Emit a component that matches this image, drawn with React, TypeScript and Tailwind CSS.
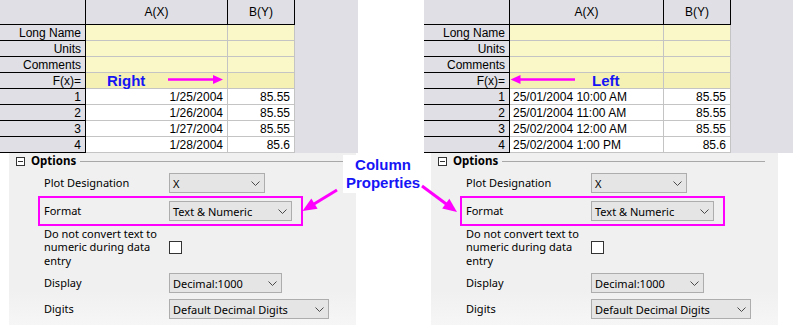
import React from 'react'

type Row = { head: string; a: string; b: string; kind: 'meta' | 'fx' | 'data' }

const leftRows: Row[] = [
  { head: 'Long Name', a: '', b: '', kind: 'meta' },
  { head: 'Units', a: '', b: '', kind: 'meta' },
  { head: 'Comments', a: '', b: '', kind: 'meta' },
  { head: 'F(x)=', a: '', b: '', kind: 'fx' },
  { head: '1', a: '1/25/2004', b: '85.55', kind: 'data' },
  { head: '2', a: '1/26/2004', b: '85.55', kind: 'data' },
  { head: '3', a: '1/27/2004', b: '85.55', kind: 'data' },
  { head: '4', a: '1/28/2004', b: '85.6', kind: 'data' },
]

const rightRows: Row[] = [
  { head: 'Long Name', a: '', b: '', kind: 'meta' },
  { head: 'Units', a: '', b: '', kind: 'meta' },
  { head: 'Comments', a: '', b: '', kind: 'meta' },
  { head: 'F(x)=', a: '', b: '', kind: 'fx' },
  { head: '1', a: '25/01/2004 10:00 AM', b: '85.55', kind: 'data' },
  { head: '2', a: '25/01/2004 11:00 AM', b: '85.55', kind: 'data' },
  { head: '3', a: '25/02/2004 12:00 AM', b: '85.55', kind: 'data' },
  { head: '4', a: '25/02/2004 1:00 PM', b: '85.6', kind: 'data' },
]

const cellBg = (kind: Row['kind']) =>
  kind === 'meta' ? 'bg-[#faf8c8]'
  : kind === 'fx' ? 'bg-[#f5f1b4]'
  : 'bg-white'

const Worksheet = ({
  rows,
  colA,
  alignA,
  fxLabel,
}: {
  rows: Row[]
  colA: string
  alignA: 'left' | 'right'
  fxLabel: React.ReactNode
}) => (
  <div className="flex w-full flex-col bg-[#dfdfe5] font-['Liberation_Sans',Arial,sans-serif] text-[12px] text-black">
    <div className="flex h-[25px]">
      <div className="h-full w-[86px] shrink-0 border-r border-b border-black" />
      <div className={`flex h-full ${colA} shrink-0 items-center justify-center border-r border-b border-black`}>A(X)</div>
      <div className="flex h-full w-[67px] shrink-0 items-center justify-center border-r border-b border-black">B(Y)</div>
    </div>
    {rows.map(row => (
      <div key={row.head} className="flex h-[16px]">
        <div className="flex h-full w-[86px] shrink-0 items-center justify-end border-r border-b border-black pr-[4px] leading-none">
          {row.head}
        </div>
        <div
          className={`flex h-full ${colA} shrink-0 items-center border-r border-b border-[#c4c4c4] leading-none ${cellBg(row.kind)} ${
            alignA === 'right' ? 'justify-end pr-[4px]' : 'justify-start pl-[3px]'
          }`}>
          {row.kind === 'fx' ? fxLabel : row.a}
        </div>
        <div
          className={`flex h-full w-[67px] shrink-0 items-center justify-end border-r border-b border-[#c4c4c4] pr-[4px] leading-none ${cellBg(row.kind)}`}>
          {row.b}
        </div>
      </div>
    ))}
  </div>
)

const Chevron = () => (
  <svg width="9" height="5" viewBox="0 0 9 5" className="shrink-0">
    <polyline points="0.5,0.5 4.5,4.5 8.5,0.5" fill="none" stroke="#4a4a4a" strokeWidth="1" />
  </svg>
)

const Dropdown = ({ value, width }: { value: string; width: string }) => (
  <div className={`flex h-[20px] ${width} items-center justify-between border border-[#adadad] bg-[#e5e5e5] pr-[4px] pl-[3px]`}>
    <span className="leading-none">{value}</span>
    <Chevron />
  </div>
)

const Label = ({ children }: { children: React.ReactNode }) => (
  <div className="w-[125px] shrink-0 leading-[13.3px]">{children}</div>
)

const OptionsPanel = () => (
  <div className="flex h-[172px] w-[347px] flex-col bg-gradient-to-b from-[#f0f0f0] from-80% to-[#f6f6f6] font-['Noto_Sans',sans-serif] text-[11px] text-black">
    <div className="flex h-[16px] items-center pl-[7px]">
      <div className="flex h-[9px] w-[9px] items-center justify-center border border-[#333] bg-white">
        <div className="h-px w-[5px] bg-[#333]" />
      </div>
      <span className="ml-[6px] text-[11.5px] leading-none font-bold">Options</span>
      <div className="mr-[13px] ml-[4px] h-px flex-1 bg-[#a8a8a8]" />
    </div>

    <div className="mt-[4px] flex h-[20px] items-center pl-[35px]">
      <Label>Plot Designation</Label>
      <Dropdown value="X" width="w-[96px]" />
    </div>

    <div className="mt-[3px] ml-[29px] flex h-[30px] w-[265px] items-center border-2 border-[#ff00ff] pl-[4px]">
      <Label>Format</Label>
      <Dropdown value="Text & Numeric" width="w-[123px]" />
    </div>

    <div className="mt-[1px] flex h-[40px] items-center pl-[35px]">
      <Label>Do not convert text to numeric during data entry</Label>
      <div className="h-[13px] w-[13px] border border-[#333] bg-white" />
    </div>

    <div className="mt-[6px] flex h-[20px] items-center pl-[35px]">
      <Label>Display</Label>
      <Dropdown value="Decimal:1000" width="w-[113px]" />
    </div>

    <div className="mt-[6px] flex h-[20px] items-center pl-[35px]">
      <Label>Digits</Label>
      <Dropdown value="Default Decimal Digits" width="w-[160px]" />
    </div>
  </div>
)

const Arrow = ({ x1, y1, x2, y2, head, half, width }: { x1: number; y1: number; x2: number; y2: number; head: number; half: number; width: number }) => {
  const len = Math.hypot(x2 - x1, y2 - y1)
  const ux = (x2 - x1) / len
  const uy = (y2 - y1) / len
  const bx = x2 - ux * head
  const by = y2 - uy * head
  const nx = -uy * half
  const ny = ux * half
  return (
    <g>
      <line x1={x1} y1={y1} x2={bx + ux} y2={by + uy} stroke="#ff00ff" strokeWidth={width} />
      <polygon points={`${x2},${y2} ${bx + nx},${by + ny} ${bx - nx},${by - ny}`} fill="#ff00ff" />
    </g>
  )
}

const blueText = "font-['Liberation_Sans',Arial,sans-serif] text-[15px] font-bold leading-none text-[#1515f5]"

export default function App() {
  return (
    <div className="relative flex h-[325px] w-[793px] overflow-hidden bg-white">
      <div className="flex w-[358px] shrink-0 flex-col">
        <Worksheet rows={leftRows} colA="w-[142px]" alignA="right" fxLabel={<span className={`pl-[21px] ${blueText} mr-auto`}>Right</span>} />
        <div className="ml-[9px]">
          <OptionsPanel />
        </div>
      </div>

      <div className="ml-[66px] flex w-[369px] shrink-0 flex-col">
        <Worksheet rows={rightRows} colA="w-[154px]" alignA="left" fxLabel={<span className={`pl-[79px] ${blueText}`}>Left</span>} />
        <div className="ml-[7px]">
          <OptionsPanel />
        </div>
      </div>

      <div className={`absolute top-[155px] left-[343px] w-[80px] bg-white py-[1px] text-center leading-[18px] ${blueText}`}>
        <div className="leading-[18px]">Column</div>
        <div className="leading-[18px]">Properties</div>
      </div>

      <svg className="pointer-events-none absolute inset-0" width="793" height="325">
        <Arrow x1={168} y1={79.5} x2={223} y2={79.5} head={10} half={4.5} width={2.6} />
        <Arrow x1={575} y1={79.5} x2={510.5} y2={79.5} head={10} half={4.5} width={2.6} />
        <Arrow x1={337} y1={190} x2={302.5} y2={211} head={14} half={6} width={3} />
        <Arrow x1={422} y1={186} x2={457} y2={212} head={14} half={6} width={3} />
      </svg>
    </div>
  )
}
